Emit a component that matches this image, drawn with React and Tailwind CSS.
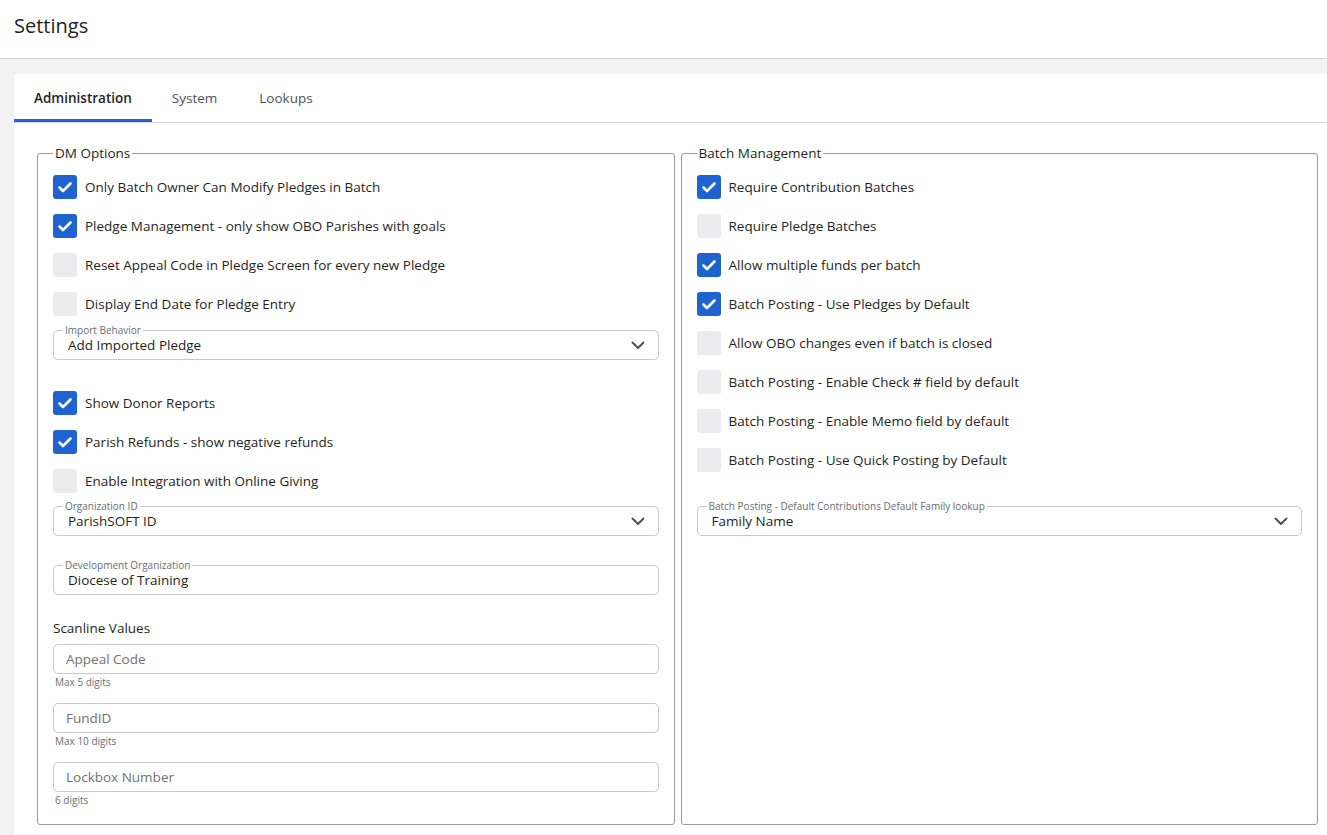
import React from "react";

const FONT = { fontFamily: '"Open Sans", "Liberation Sans", sans-serif' };

const Check = ({ checked, label }) => (
  <div className="flex items-center gap-2 h-6">
    <span
      className={`w-6 h-6 rounded-[3px] flex items-center justify-center shrink-0 ${
        checked ? "bg-[#1f63d0]" : "bg-[#ececee]"
      }`}
    >
      {checked && (
        <svg width="18" height="18" viewBox="0 0 18 18" fill="none">
          <path
            d="M3.5 9.5l3.5 3.5L14.5 5.5"
            stroke="white"
            strokeWidth="2.6"
            strokeLinecap="round"
            strokeLinejoin="round"
          />
        </svg>
      )}
    </span>
    <span className="text-[13.5px] text-[#1f1f1f]">{label}</span>
  </div>
);

const Chevron = () => (
  <svg width="16" height="10" viewBox="0 0 16 10" fill="none">
    <path
      d="M2.5 2.5l5.5 5.5 5.5-5.5"
      stroke="#4f5257"
      strokeWidth="2"
      strokeLinecap="round"
      strokeLinejoin="round"
    />
  </svg>
);

const Outlined = ({ label, value, select, className = "" }) => (
  <fieldset className={`border border-[#c8c8cc] rounded-[5px] pl-[9px] pr-[12px] pb-[5px] ${className}`}>
    <legend className="px-[2px] text-[10px] leading-[12px] text-[#6a6e73]">{label}</legend>
    <div className="flex items-center justify-between pl-[5px] h-[18px]">
      <span className="text-[13.5px] text-[#1f1f1f]">{value}</span>
      {select && <Chevron />}
    </div>
  </fieldset>
);

const TextBox = ({ placeholder, helper, className = "" }) => (
  <div className={className}>
    <div className="h-[30px] border border-[#c8c8cc] rounded-[5px] px-[12px] flex items-center text-[13.5px] text-[#6f7276]">
      {placeholder}
    </div>
    <div className="mt-[1px] pl-[2px] text-[10px] leading-[14px] text-[#6a6e73]">{helper}</div>
  </div>
);

export default function App() {
  return (
    <div className="min-h-[835px] bg-[#f2f2f3] flex flex-col" style={FONT}>
      <header className="h-[59px] bg-white border-b border-[#d6d6d8] flex items-center pl-[14px] pb-[6px]">
        <h1 className="text-xl text-[#1f1f1f]">Settings</h1>
      </header>

      <main className="flex-1 pt-[15px] pl-[14px] flex">
        <div className="flex-1 bg-white">
          <div className="h-[49px] flex border-b border-[#d6d6d8]">
            <div className="px-5 flex items-center border-b-[3px] border-[#2563c9] pt-[3px] text-[13.5px] font-semibold text-[#1f1f1f]">
              Administration
            </div>
            <div className="px-5 flex items-center text-[13.5px] text-[#4f5257]">System</div>
            <div className="pl-[22px] pr-5 flex items-center text-[13.5px] text-[#4f5257]">Lookups</div>
          </div>

          <div className="pt-5 pl-[23px] pr-[9px] pb-[10px] grid grid-cols-2 gap-[6px]">
            <fieldset className="border border-[#9c9c9f] rounded-[3px] px-[15px] pt-3 pb-[17px] flex flex-col">
              <legend className="px-[2px] text-[13.5px] leading-5 text-[#1f1f1f]">DM Options</legend>
              <div className="flex flex-col gap-[15px]">
                <Check checked label="Only Batch Owner Can Modify Pledges in Batch" />
                <Check checked label="Pledge Management - only show OBO Parishes with goals" />
                <Check label="Reset Appeal Code in Pledge Screen for every new Pledge" />
                <Check label="Display End Date for Pledge Entry" />
              </div>
              <Outlined className="mt-[8px]" label="Import Behavior" value="Add Imported Pledge" select />
              <div className="mt-[31px] flex flex-col gap-[15px]">
                <Check checked label="Show Donor Reports" />
                <Check checked label="Parish Refunds - show negative refunds" />
                <Check label="Enable Integration with Online Giving" />
              </div>
              <Outlined className="mt-[7px]" label="Organization ID" value="ParishSOFT ID" select />
              <Outlined className="mt-[23px]" label="Development Organization" value="Diocese of Training" />
              <div className="mt-[23px] text-[13.5px] leading-5 text-[#1f1f1f]">Scanline Values</div>
              <TextBox className="mt-[6px]" placeholder="Appeal Code" helper="Max 5 digits" />
              <TextBox className="mt-[14px]" placeholder="FundID" helper="Max 10 digits" />
              <TextBox className="mt-[14px]" placeholder="Lockbox Number" helper="6 digits" />
            </fieldset>

            <fieldset className="border border-[#9c9c9f] rounded-[3px] px-[15px] pt-3 pb-[17px] flex flex-col">
              <legend className="px-[2px] text-[13.5px] leading-5 text-[#1f1f1f]">Batch Management</legend>
              <div className="flex flex-col gap-[15px]">
                <Check checked label="Require Contribution Batches" />
                <Check label="Require Pledge Batches" />
                <Check checked label="Allow multiple funds per batch" />
                <Check checked label="Batch Posting - Use Pledges by Default" />
                <Check label="Allow OBO changes even if batch is closed" />
                <Check label="Batch Posting - Enable Check # field by default" />
                <Check label="Batch Posting - Enable Memo field by default" />
                <Check label="Batch Posting - Use Quick Posting by Default" />
              </div>
              <Outlined
                className="mt-[28px]"
                label="Batch Posting - Default Contributions Default Family lookup"
                value="Family Name"
                select
              />
            </fieldset>
          </div>
        </div>
      </main>
    </div>
  );
}
